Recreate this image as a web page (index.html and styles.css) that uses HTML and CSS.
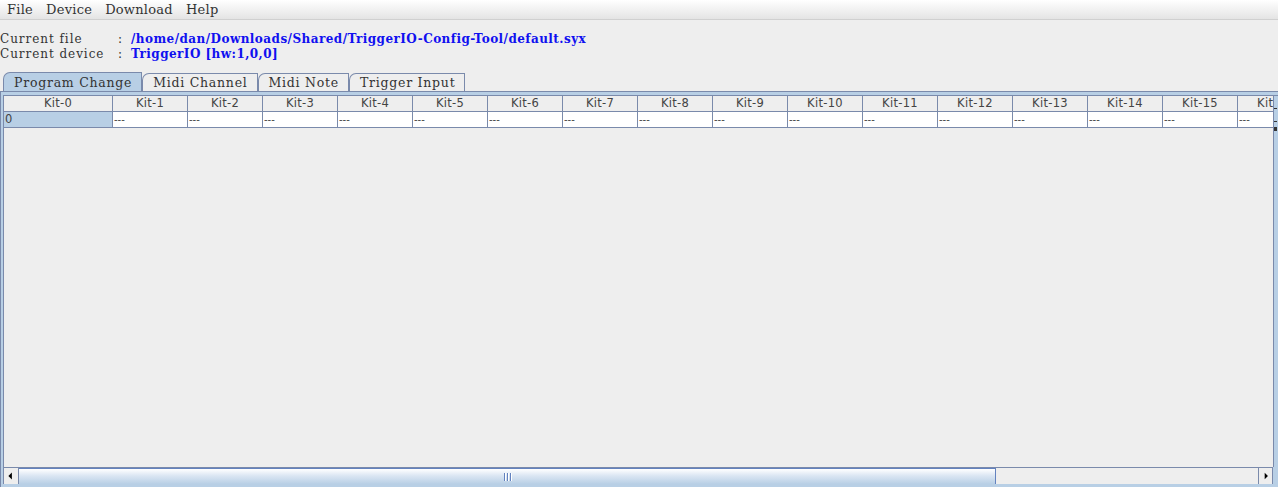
FILE: index.html
```html
<!DOCTYPE html>
<html>
<head>
<meta charset="utf-8">
<link rel="stylesheet" href="styles.css">
</head>
<body>
<div class="app">
  <div class="menubar">
    <span class="menu">File</span>
    <span class="menu">Device</span>
    <span class="menu">Download</span>
    <span class="menu">Help</span>
  </div>
  <div class="info">
    <div class="info-row"><span class="label">Current file</span><span class="colon">:</span><span class="value">/home/dan/Downloads/Shared/TriggerIO-Config-Tool/default.syx</span></div>
    <div class="info-row"><span class="label">Current device</span><span class="colon">:</span><span class="value">TriggerIO [hw:1,0,0]</span></div>
  </div>
  <div class="tabs">
    <div class="tab selected">Program Change</div>
    <div class="tab">Midi Channel</div>
    <div class="tab">Midi Note</div>
    <div class="tab">Trigger Input</div>
  </div>
  <div class="panel">
    <div class="scrollpane">
      <div class="viewport">
        <div class="table">
          <div class="thead">
            <div class="th first">Kit-0</div>
            <div class="th">Kit-1</div>
            <div class="th">Kit-2</div>
            <div class="th">Kit-3</div>
            <div class="th">Kit-4</div>
            <div class="th">Kit-5</div>
            <div class="th">Kit-6</div>
            <div class="th">Kit-7</div>
            <div class="th">Kit-8</div>
            <div class="th">Kit-9</div>
            <div class="th">Kit-10</div>
            <div class="th">Kit-11</div>
            <div class="th">Kit-12</div>
            <div class="th">Kit-13</div>
            <div class="th">Kit-14</div>
            <div class="th">Kit-15</div>
            <div class="th">Kit-16</div>
          </div>
          <div class="trow">
            <div class="td first sel">0</div>
            <div class="td">---</div>
            <div class="td">---</div>
            <div class="td">---</div>
            <div class="td">---</div>
            <div class="td">---</div>
            <div class="td">---</div>
            <div class="td">---</div>
            <div class="td">---</div>
            <div class="td">---</div>
            <div class="td">---</div>
            <div class="td">---</div>
            <div class="td">---</div>
            <div class="td">---</div>
            <div class="td">---</div>
            <div class="td">---</div>
            <div class="td">---</div>
          </div>
        </div>
      </div>
      <div class="vscroll"><div class="vs-line"></div><div class="vs-line"></div><div class="vs-dot"></div></div>
    </div>
    <div class="hscroll">
      <div class="arrow left"><svg width="16" height="16" viewBox="0 0 16 16"><path d="M5 8 L9 4 L9 12 Z" fill="#000"/></svg></div>
      <div class="thumb"><span class="grip"></span><span class="grip"></span><span class="grip"></span></div>
      <div class="track"></div>
      <div class="arrow right"><svg width="16" height="16" viewBox="0 0 16 16"><path d="M11 8 L7 4 L7 12 Z" fill="#000"/></svg></div>
    </div>
  </div>
</div>
</body>
</html>
```
FILE: styles.css
```css
* { box-sizing: border-box; }
html, body { margin: 0; padding: 0; }
body {
  width: 1278px;
  height: 487px;
  overflow: hidden;
  background: #eeeeee;
  font-family: "DejaVu Serif", serif;
  color: #333333;
}
.app {
  display: flex;
  flex-direction: column;
  height: 487px;
}
.menubar {
  height: 20px;
  display: flex;
  align-items: center;
  padding-left: 1px;
  background: linear-gradient(#ffffff, #e4e4e4);
  border-bottom: 1px solid #d0d0d0;
  font-size: 13px;
  color: #333;
}
.menu {
  padding: 0 6px;
  margin-right: 1px;
  letter-spacing: 0.25px;
}
.info {
  padding-top: 12px;
  font-size: 12px;
  line-height: 15px;
}
.info-row { display: flex; }
.label { width: 118px; color: #333; letter-spacing: 0.95px; }
.colon { width: 13px; color: #333; }
.value { color: #1010f0; font-weight: 600; letter-spacing: 0.45px; }
.tabs {
  margin-top: 10px;
  display: flex;
  padding-left: 3px;
  height: 19px;
  align-items: flex-end;
}
.tab {
  height: 18px;
  padding: 0 9px 0 10px;
  border: 1px solid #7a8aab;
  border-bottom: none;
  border-top-left-radius: 7px 7px;
  font-size: 12.5px;
  line-height: 17px;
  background: #eeeeee;
  color: #333;
  letter-spacing: 0.75px;
}
.tab + .tab { border-left-color: #7a8aab; }
.tab.selected {
  background: #b8cfe5;
  height: 19px;
  padding-top: 1px;
}
.panel {
  flex: 1;
  display: flex;
  flex-direction: column;
  border-top: 1px solid #7a8aab;
  border-left: 1px solid #7a8aab;
  background: #b8cfe5;
  padding: 3px 0 3px 2px;
}
.scrollpane {
  flex: 1;
  display: flex;
  border-left: 1px solid #7a8aab;
  border-top: 1px solid #7a8aab;
  background: #eeeeee;
  overflow: hidden;
}
.viewport {
  flex: 1;
  overflow: hidden;
  background: #eeeeee;
}
.table {
  width: max-content;
  font-family: "DejaVu Sans", sans-serif;
  font-size: 11.5px;
  color: #444;
}
.thead, .trow { display: flex; }
.th {
  width: 75px;
  height: 16px;
  line-height: 15px;
  text-align: center;
  border-right: 1px solid #7a8aab;
  border-bottom: 1px solid #7a8aab;
  background: #eeeeee;
  letter-spacing: 0.3px;
  white-space: nowrap;
  overflow: hidden;
}
.th.first { width: 109px; }
.td {
  width: 75px;
  height: 16px;
  line-height: 15px;
  padding-left: 1px;
  background: #ffffff;
  border-right: 1px solid #7a8aab;
  border-bottom: 1px solid #7a8aab;
  font-size: 10px;
}
.td.first { width: 109px; font-size: 11.5px; }
.td.sel { background: #b8cfe5; }
.vscroll {
  width: 5px;
  border-left: 1px solid #7a8aab;
  background: #b8cfe5;
}
.vs-line { height: 1px; background: #333; margin-top: 12px; width: 3px; }
.vs-dot { width: 3px; height: 4px; background: #333; margin-top: 5px; }
.hscroll {
  height: 17px;
  display: flex;
  border-top: 1px solid #7a8aab;
  border-left: 1px solid #7a8aab;
  background: #eeeeee;
  margin-right: 5px;
}
.arrow {
  width: 15px;
  height: 16px;
  background: #eeeeee;
  border-right: 1px solid #7a8aab;
  display: flex;
  align-items: center;
  justify-content: center;
}
.arrow.right { border-left: 1px solid #7a8aab; border-right: 1px solid #7a8aab; }
.thumb {
  width: 977px;
  height: 16px;
  background: linear-gradient(#ffffff, #dbe6f3 45%, #b8cfe5);
  border-right: 1px solid #6382bf;
  border-top: 1px solid #6382bf;
  display: flex;
  justify-content: center;
  align-items: center;
  gap: 2px;
}
.grip { width: 1px; height: 8px; background: #6382bf; box-shadow: 1px 0 0 #fff; }
.track { flex: 1; background: #eeeeee; }
```
